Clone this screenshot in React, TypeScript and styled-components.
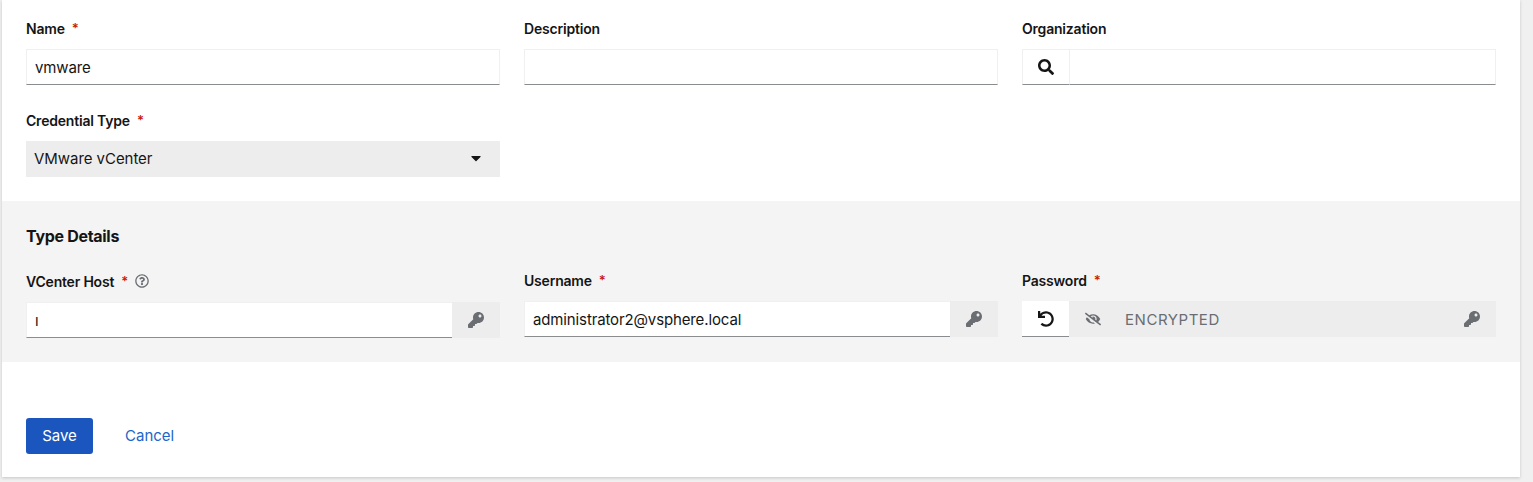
import styled, { createGlobalStyle } from 'styled-components'
import { FaCaretDown, FaEyeSlash, FaKey, FaRegQuestionCircle, FaSearch, FaUndo } from 'react-icons/fa'

const GlobalStyle = createGlobalStyle`
  html, body {
    margin: 0;
    padding: 0;
    height: 100%;
    overflow: hidden;
    background: #f0f0f0;
  }
  body {
    font-family: Inter, 'Open Sans', sans-serif;
    color: #151515;
  }
`

const Card = styled.div`
  box-sizing: border-box;
  width: 1518px;
  height: 477px;
  margin-left: 2px;
  background: #fff;
  box-shadow: 0 1px 3px rgba(3, 3, 3, 0.18);
  padding-top: 21px;
`

const Grid = styled.div`
  display: grid;
  grid-template-columns: repeat(3, 474px);
  column-gap: 24px;
  row-gap: 28px;
  padding: 0 24px;
`

const Field = styled.div<{ $shifted?: boolean }>`
  display: flex;
  flex-direction: column;
  min-width: 0;
  padding-top: ${(p) => (p.$shifted ? '1px' : '0')};
`

const Label = styled.div`
  box-sizing: border-box;
  display: flex;
  align-items: center;
  height: 16px;
  padding-bottom: 2px;
  margin-bottom: 12px;
  font-size: 14px;
  font-weight: 600;
  letter-spacing: -0.2px;
`

const Star = styled.span`
  color: #c9190b;
  margin-left: 7px;
  font-size: 13px;
`

const Help = styled.span`
  display: inline-flex;
  margin-left: 7px;
  color: #6a6e73;
  font-size: 14px;
`

const Control = styled.div`
  display: flex;
  height: 36px;
`

const TextInput = styled.input<{ $joined?: boolean }>`
  box-sizing: border-box;
  flex: 1;
  min-width: 0;
  height: 36px;
  padding: 0 8px;
  border: 1px solid #f0f0f0;
  border-bottom-color: #8a8d90;
  border-right-width: ${(p) => (p.$joined ? '0' : '1px')};
  border-radius: 0;
  outline: none;
  background: #fff;
  color: #151515;
  font-family: inherit;
  font-size: 15px;
  letter-spacing: -0.13px;
`

const SearchButton = styled.div`
  box-sizing: border-box;
  flex: none;
  display: flex;
  align-items: center;
  justify-content: center;
  width: 47px;
  height: 36px;
  border: 1px solid #f0f0f0;
  border-right: none;
  border-bottom-color: #8a8d90;
  font-size: 16px;
`

const Select = styled.div`
  display: flex;
  align-items: center;
  justify-content: space-between;
  box-sizing: border-box;
  height: 36px;
  padding: 0 16px 2px 8px;
  background: #ededed;
  font-size: 15px;
  letter-spacing: -0.05px;
`

const KeyAddon = styled.div`
  flex: none;
  display: flex;
  align-items: center;
  justify-content: center;
  width: 48px;
  height: 36px;
  background: #ededed;
  color: #6a6e73;
  font-size: 16px;
`

const DetailsSection = styled.section`
  box-sizing: border-box;
  height: 161px;
  margin-top: 24px;
  padding-top: 26px;
  background: #f4f4f4;
`

const DetailsTitle = styled.h2`
  margin: 0 0 28px 24px;
  height: 18px;
  line-height: 18px;
  font-size: 16px;
  font-weight: 700;
  letter-spacing: -0.3px;
`

const UndoButton = styled.div`
  box-sizing: border-box;
  flex: none;
  display: flex;
  align-items: center;
  justify-content: center;
  width: 47px;
  height: 36px;
  background: #fff;
  border-bottom: 1px solid #8a8d90;
  font-size: 16px;
`

const EncryptedBox = styled.div`
  flex: 1;
  display: flex;
  align-items: center;
  height: 36px;
  background: #ededed;
  color: #6a6e73;
`

const EyeIcon = styled.span`
  flex: none;
  display: flex;
  justify-content: center;
  width: 47px;
  font-size: 16px;
`

const EncryptedText = styled.span`
  flex: 1;
  padding-left: 9px;
  font-size: 15px;
  letter-spacing: 0.55px;
`

const Actions = styled.div`
  display: flex;
  align-items: center;
  gap: 16px;
  margin-top: 56px;
  padding-left: 24px;
`

const SaveButton = styled.button`
  width: 67px;
  height: 36px;
  padding: 0 0 2px;
  border: none;
  border-radius: 3px;
  background: #1b56bf;
  color: #fff;
  font-family: inherit;
  font-size: 15px;
`

const CancelButton = styled.button`
  height: 36px;
  padding: 0 16px 2px;
  border: none;
  background: transparent;
  color: #1b66ca;
  font-family: inherit;
  font-size: 15px;
`

function FieldLabel({ text, required, help }: { text: string; required?: boolean; help?: boolean }) {
  return (
    <Label>
      {text}
      {required && <Star>*</Star>}
      {help && (
        <Help>
          <FaRegQuestionCircle />
        </Help>
      )}
    </Label>
  )
}

export default function App() {
  return (
    <>
      <GlobalStyle />
      <Card>
        <Grid>
          <Field>
            <FieldLabel text="Name" required />
            <Control>
              <TextInput readOnly value="vmware" />
            </Control>
          </Field>
          <Field>
            <FieldLabel text="Description" />
            <Control>
              <TextInput readOnly value="" />
            </Control>
          </Field>
          <Field>
            <FieldLabel text="Organization" />
            <Control>
              <SearchButton>
                <FaSearch />
              </SearchButton>
              <TextInput readOnly value="" />
            </Control>
          </Field>
          <Field>
            <FieldLabel text="Credential Type" required />
            <Select>
              VMware vCenter
              <FaCaretDown size={16} />
            </Select>
          </Field>
        </Grid>

        <DetailsSection>
          <DetailsTitle>Type Details</DetailsTitle>
          <Grid>
            <Field $shifted>
              <FieldLabel text="VCenter Host" required help />
              <Control>
                <TextInput $joined readOnly value="ı" />
                <KeyAddon>
                  <FaKey />
                </KeyAddon>
              </Control>
            </Field>
            <Field>
              <FieldLabel text="Username" required />
              <Control>
                <TextInput $joined readOnly value="administrator2@vsphere.local" />
                <KeyAddon>
                  <FaKey />
                </KeyAddon>
              </Control>
            </Field>
            <Field>
              <FieldLabel text="Password" required />
              <Control>
                <UndoButton>
                  <FaUndo />
                </UndoButton>
                <EncryptedBox>
                  <EyeIcon>
                    <FaEyeSlash />
                  </EyeIcon>
                  <EncryptedText>ENCRYPTED</EncryptedText>
                  <KeyAddon>
                    <FaKey />
                  </KeyAddon>
                </EncryptedBox>
              </Control>
            </Field>
          </Grid>
        </DetailsSection>

        <Actions>
          <SaveButton>Save</SaveButton>
          <CancelButton>Cancel</CancelButton>
        </Actions>
      </Card>
    </>
  )
}
